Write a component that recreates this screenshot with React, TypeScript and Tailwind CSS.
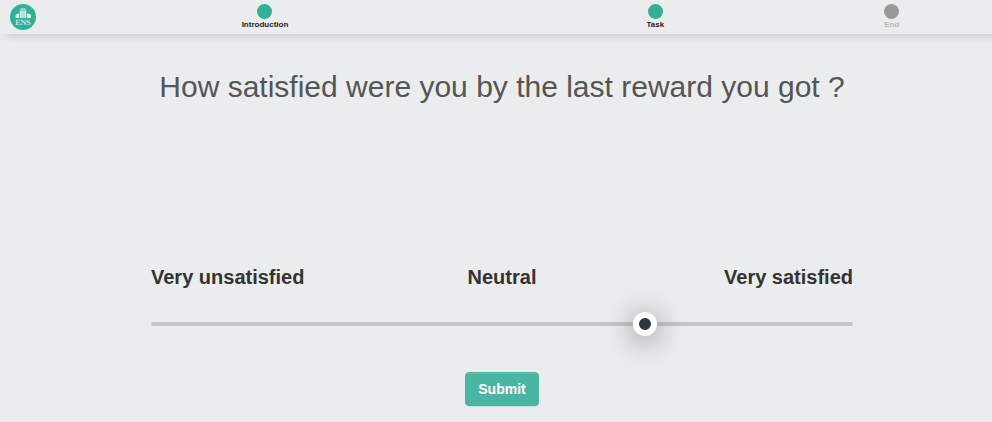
import { useState } from "react";

const steps = [
  { label: "Introduction", reached: true },
  { label: "Task", reached: true },
  { label: "End", reached: false },
];

function Logo() {
  return (
    <svg viewBox="0 0 26 26" className="size-[26px]" role="img" aria-label="ENS">
      <circle cx="13" cy="13" r="13" fill="#32b097" />
      <g fill="#d9efea">
        <path d="M10 6.5 V5 Q13 2.6 16 5 V6.5 Z" opacity="0.6" />
        <path d="M9.5 6.5 H16.5 V14 H9.5 Z" opacity="0.6" />
        <path d="M10 7 H11.5 V14 H10 Z M12.5 7 H13.5 V14 H12.5 Z M14.5 7 H16 V14 H14.5 Z" />
        <path d="M5.5 14 V11 L7.5 9.5 L9 9.5 V14 Z M17 14 V9.5 L18.5 9.5 L21 11 V14 Z" />
      </g>
      <text
        x="13"
        y="21"
        textAnchor="middle"
        fontSize="8"
        fontWeight="bold"
        textRendering="geometricPrecision"
        fill="#c3e5de"
        fontFamily="'Liberation Serif', serif"
      >
        ENS
      </text>
    </svg>
  );
}

export default function App() {
  const [value, setValue] = useState(71.1);

  return (
    <div className="min-h-screen bg-[#ebecee] font-['Liberation_Sans',Arial,sans-serif] text-[#333333]">
      <header className="flex h-[34px] items-center pl-[10px] pr-9 shadow-[6px_2px_8px_rgba(0,0,0,0.16)]">
        <Logo />
        <ol className="ml-[11px] grid flex-1 grid-cols-[435fr_344fr_128fr]">
          {steps.map((step) => (
            <li key={step.label} className="flex flex-col items-center">
              <span
                className={`size-[15px] rounded-full ${step.reached ? "bg-[#32b097]" : "bg-[#999999]"}`}
              />
              <span
                className={`text-[8px] leading-[11px] font-bold ${step.reached ? "text-[#222222]" : "text-[#b5b5b7]"}`}
              >
                {step.label}
              </span>
            </li>
          ))}
        </ol>
      </header>

      <main className="flex flex-col items-center pl-3">
        <h1 className="mt-9 text-center text-[30px] leading-[33px] text-[#555555]">
          How satisfied were you by the last reward you got ?
        </h1>

        <form
          className="mt-[160px] flex w-full max-w-[702px] flex-col items-center"
          onSubmit={(event) => event.preventDefault()}
        >
          <div className="grid w-full grid-cols-3 text-xl leading-7 font-bold">
            <span>Very unsatisfied</span>
            <span className="text-center">Neutral</span>
            <span className="text-right">Very satisfied</span>
          </div>
          <input
            type="range"
            min={0}
            max={100}
            step={0.1}
            value={value}
            aria-label="Satisfaction"
            onChange={(event) => setValue(Number(event.target.value))}
            className="mt-[21px] block h-6 w-full appearance-none bg-transparent [&::-webkit-slider-runnable-track]:h-1 [&::-webkit-slider-runnable-track]:rounded-sm [&::-webkit-slider-runnable-track]:bg-[#c5c6c8] [&::-webkit-slider-thumb]:-mt-[10px] [&::-webkit-slider-thumb]:size-6 [&::-webkit-slider-thumb]:appearance-none [&::-webkit-slider-thumb]:rounded-full [&::-webkit-slider-thumb]:border-[6px] [&::-webkit-slider-thumb]:border-white [&::-webkit-slider-thumb]:bg-[#2f3640] [&::-webkit-slider-thumb]:shadow-[0_4px_28px_rgba(0,0,0,0.5)]"
          />
          <button
            type="submit"
            className="mt-9 h-[34px] rounded-[4px] border border-[#47b3a0] bg-[#4bb5a3] px-3 text-sm font-bold text-white shadow-[inset_0_1px_0_rgba(255,255,255,0.15),0_1px_1px_rgba(0,0,0,0.08)]"
          >
            Submit
          </button>
        </form>
      </main>
    </div>
  );
}
